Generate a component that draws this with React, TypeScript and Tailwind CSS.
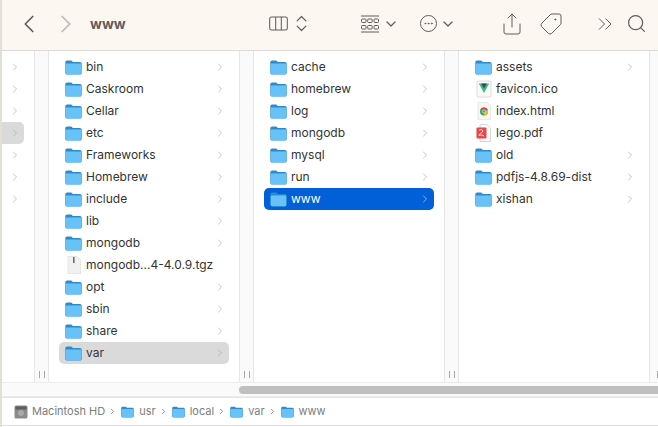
import { ChevronLeft, ChevronRight, ChevronDown, ChevronsUpDown, Ellipsis, Search, Share, Tag } from "lucide-react";

type Item = { name: string; kind?: "folder" | "tgz" | "vue" | "chrome" | "pdf"; arrow?: boolean };

const folder = (name: string): Item => ({ name, kind: "folder", arrow: true });

const usrLocal: Item[] = [
  folder("bin"),
  folder("Caskroom"),
  folder("Cellar"),
  folder("etc"),
  folder("Frameworks"),
  folder("Homebrew"),
  folder("include"),
  folder("lib"),
  folder("mongodb"),
  { name: "mongodb...4-4.0.9.tgz", kind: "tgz" },
  folder("opt"),
  folder("sbin"),
  folder("share"),
  folder("var"),
];

const varDir: Item[] = ["cache", "homebrew", "log", "mongodb", "mysql", "run", "www"].map(folder);

const wwwDir: Item[] = [
  folder("assets"),
  { name: "favicon.ico", kind: "vue" },
  { name: "index.html", kind: "chrome" },
  { name: "lego.pdf", kind: "pdf" },
  folder("old"),
  folder("pdfjs-4.8.69-dist"),
  folder("xishan"),
];

function FolderIcon({ className = "" }: { className?: string }) {
  return (
    <svg viewBox="0 0 16 14" className={className}>
      <path d="M0.3 2.2C0.3 1.1 1 0.4 2 0.4H5.4C6.1 0.4 6.4 0.7 6.8 1.2L7.3 1.8H14C15.1 1.8 15.7 2.5 15.7 3.5V12C15.7 13.1 15.1 13.7 14 13.7H2C1 13.7 0.3 13.1 0.3 12Z" fill="#2c8ccb" />
      <path d="M0.7 4.3C0.7 3.6 1.1 3.2 1.8 3.2H14.2C14.9 3.2 15.3 3.6 15.3 4.3V12C15.3 12.8 14.8 13.3 14 13.3H2C1.2 13.3 0.7 12.8 0.7 12Z" fill="#68c1f7" />
    </svg>
  );
}

function FileIcon({ kind }: { kind: Item["kind"] }) {
  if (kind === "tgz") {
    return (
      <svg viewBox="0 0 16 18" className="h-[18px] w-4">
        <path d="M2 0.5H11L14.5 4V17.5H2Z" fill="#f1f1f1" stroke="#d9d9d9" strokeWidth="0.6" />
        <rect x="7" y="1" width="1.6" height="6" fill="#6a6a6a" />
      </svg>
    );
  }
  if (kind === "vue") {
    return (
      <svg viewBox="0 0 16 18" className="h-[18px] w-4">
        <rect x="1" y="1" width="14" height="16" rx="1" fill="#fafafa" stroke="#cfcfcf" strokeWidth="0.7" />
        <path d="M2.8 3.5H13.2L8 13Z" fill="#41b883" />
        <path d="M5.3 3.5H10.7L8 8.4Z" fill="#34495e" />
      </svg>
    );
  }
  if (kind === "chrome") {
    return (
      <svg viewBox="0 0 16 18" className="h-[18px] w-4">
        <path d="M2 0.5H11L14.5 4V17.5H2Z" fill="#f6f6f6" stroke="#dedede" strokeWidth="0.6" />
        <circle cx="8" cy="9.5" r="4" fill="#34a853" />
        <path d="M4.6 7.4A4 4 0 0 1 11.6 7.8L8 8.4Z" fill="#ea4335" />
        <path d="M11.6 7.8A4 4 0 0 1 8 13.5L8.6 10Z" fill="#fbbc05" />
        <circle cx="8" cy="9.5" r="1.6" fill="#4285f4" stroke="#fff" strokeWidth="0.6" />
      </svg>
    );
  }
  return (
    <svg viewBox="0 0 16 18" className="h-[18px] w-4">
      <path d="M4 0.5H11L14.5 4V17.5H4Z" fill="#fbfbfb" stroke="#bdbdbd" strokeWidth="0.6" />
      <rect x="0.5" y="3.5" width="10" height="11" rx="1" fill="#e8464b" />
      <path d="M3 6.5C4.5 4.8 7.5 5.6 6.5 7.8C5.8 9.3 3.5 9 3 11.5C4.5 10.8 6.5 11 8 12" fill="none" stroke="#fff" strokeWidth="0.9" />
    </svg>
  );
}

function Row({ item, state }: { item: Item; state?: "active" | "muted" }) {
  const active = state === "active";
  const bg = active ? "bg-[#0160d8] text-white" : state === "muted" ? "bg-[#dadada]" : "";
  return (
    <div className={`mx-[10px] flex h-[22px] items-center rounded-[5px] pl-[6px] pr-[3px] ${bg}`}>
      <div className="flex w-[17px] shrink-0 justify-center">
        {item.kind === "folder" ? <FolderIcon className="h-[15px] w-[17px]" /> : <FileIcon kind={item.kind} />}
      </div>
      <span className="ml-[4px] flex-1 truncate">{item.name}</span>
      {item.arrow && <ChevronRight size={12} strokeWidth={1.3} className={active ? "text-[#cfe0f8]" : "text-[#a5a5a5]"} />}
    </div>
  );
}

function Column({ items, selected, state, width }: { items: Item[]; selected: string; state: "active" | "muted"; width: string }) {
  return (
    <div className={`${width} shrink-0 pt-[5px]`}>
      {items.map((item) => (
        <Row key={item.name} item={item} state={item.name === selected ? state : undefined} />
      ))}
    </div>
  );
}

function Grip({ bars = 2 }: { bars?: number }) {
  return (
    <div className="flex h-full w-[15px] shrink-0 items-end justify-center gap-[4px] border-x border-[#e6e6e6] bg-[#fafafa] pb-[4px] pl-[1px]">
      <span className="h-[7px] w-px bg-[#a8a8a8]" />
      {bars === 2 && <span className="h-[7px] w-px bg-[#a8a8a8]" />}
    </div>
  );
}

function Separator() {
  return <ChevronRight size={9} strokeWidth={2} className="ml-[3px] mr-[4px] text-[#6f6f6f]" />;
}

function Crumb({ label, last }: { label: string; last?: boolean }) {
  return (
    <>
      <FolderIcon className="h-[12px] w-[13px]" />
      <span className="ml-[5px]">{label}</span>
      {!last && <Separator />}
    </>
  );
}

export default function App() {
  return (
    <div className="flex h-[427px] w-[658px] flex-col overflow-hidden border-l-2 border-[#e2ded8] bg-white font-['Inter',sans-serif] text-[12px] text-[#333]">
      <header className="flex h-[51px] shrink-0 items-center border-b border-[#dcdad7] bg-[#fdf7f1] pb-[3px] text-[#5f5c59]">
        <ChevronLeft size={30} strokeWidth={1.4} className="ml-[12px]" />
        <ChevronRight size={30} strokeWidth={1.4} className="ml-[7px] text-[#bdbab6]" />
        <span className="ml-[9px] text-[14px] font-bold">www</span>
        <svg viewBox="0 0 20 16" className="ml-[143px] h-[15px] w-[19px]" fill="none" stroke="currentColor" strokeWidth="1.1">
          <rect x="0.6" y="1" width="18.8" height="14" rx="2" />
          <path d="M7 1V15M13 1V15" />
        </svg>
        <ChevronsUpDown size={21} strokeWidth={1.4} className="ml-[3px]" />
        <svg viewBox="0 0 18 18" className="ml-[49px] h-[18px] w-[18px]" fill="none" stroke="currentColor" strokeWidth="1">
          <path d="M0 1H18M0 17H18" />
          <rect x="0.5" y="4" width="4.5" height="3.5" rx="0.8" />
          <rect x="6.7" y="4" width="4.5" height="3.5" rx="0.8" />
          <rect x="13" y="4" width="4.5" height="3.5" rx="0.8" />
          <rect x="0.5" y="10.5" width="4.5" height="3.5" rx="0.8" />
          <rect x="6.7" y="10.5" width="4.5" height="3.5" rx="0.8" />
          <rect x="13" y="10.5" width="4.5" height="3.5" rx="0.8" />
        </svg>
        <ChevronDown size={16} strokeWidth={1.8} className="ml-[4px]" />
        <div className="ml-[21px] flex h-[17px] w-[17px] items-center justify-center rounded-full border border-current">
          <Ellipsis size={11} strokeWidth={2} />
        </div>
        <ChevronDown size={16} strokeWidth={1.8} className="ml-[3px]" />
        <Share size={24} strokeWidth={1} className="ml-[44px]" />
        <Tag size={24} strokeWidth={1} className="ml-[15px] -scale-x-100" />
        <svg viewBox="0 0 14 14" className="ml-[35px] h-[14px] w-[14px]" fill="none" stroke="currentColor" strokeWidth="1">
          <path d="M1 1.5L6.5 7L1 12.5M7.5 1.5L13 7L7.5 12.5" />
        </svg>
        <Search size={21} strokeWidth={1.4} className="ml-[14px]" />
      </header>

      <main className="flex h-[331px] shrink-0">
        <div className="w-[32px] shrink-0 pt-[5px]">
          {[0, 1, 2, 3, 4, 5, 6].map((i) => (
            <div key={i} className={`mr-[10px] flex h-[22px] items-center justify-end rounded-r-[5px] pr-[3px] ${i === 3 ? "bg-[#dadada]" : ""}`}>
              <ChevronRight size={12} strokeWidth={1.3} className="text-[#a5a5a5]" />
            </div>
          ))}
        </div>
        <Grip />
        <Column items={usrLocal} selected="var" state="muted" width="w-[190px]" />
        <Grip />
        <Column items={varDir} selected="www" state="active" width="w-[190px]" />
        <Grip />
        <Column items={wwwDir} selected="" state="active" width="w-[190px]" />
        <Grip bars={1} />
      </main>

      <div className="flex h-[15px] shrink-0 items-center border-y border-[#ececec] bg-[#fafafa] pl-[237px]">
        <div className="h-[8px] flex-1 rounded-l-full bg-[#bfbfbf]" />
      </div>

      <footer className="flex h-[28px] shrink-0 items-center border-t border-[#e4e4e4] pl-[12px] text-[11px] text-[#7d7d7d]">
        <svg viewBox="0 0 14 14" className="h-[14px] w-[14px]">
          <rect x="0.5" y="0.5" width="13" height="13" rx="1.5" fill="#8b8b8b" />
          <rect x="1.5" y="1.5" width="11" height="3" fill="#5f5f5f" />
          <circle cx="7" cy="8" r="3" fill="#a9a9a9" />
        </svg>
        <span className="ml-[4px]">Macintosh HD</span>
        <Separator />
        <Crumb label="usr" />
        <Crumb label="local" />
        <Crumb label="var" />
        <Crumb label="www" last />
      </footer>
      <div className="mb-px h-px shrink-0 bg-[#e2ded8]" />
    </div>
  );
}
